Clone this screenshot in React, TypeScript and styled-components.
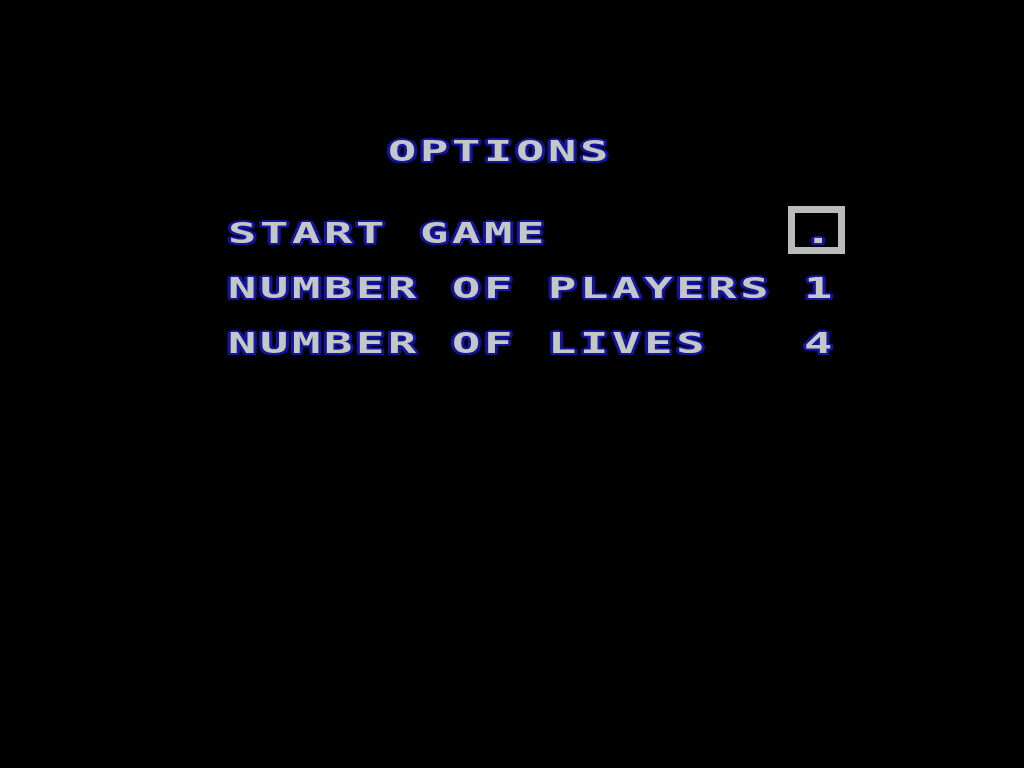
import React from "react";
import styled, { createGlobalStyle } from "styled-components";

const Global = createGlobalStyle`
  html, body { margin: 0; padding: 0; background: #000; }
  body { width: 1024px; height: 768px; overflow: hidden; }
`;

const Screen = styled.div`
  width: 1024px;
  height: 768px;
  box-sizing: border-box;
  background: #000;
  padding: 124px 0 0 228px;
  display: flex;
  flex-direction: column;
`;

const Glyphs = styled.span`
  display: inline-block;
  font-family: "DejaVu Sans Mono", "Liberation Mono", monospace;
  font-weight: 700;
  font-size: 29px;
  line-height: 55px;
  letter-spacing: 2.3px;
  color: #c4c8c4;
  white-space: pre;
  transform: scaleX(1.62);
  transform-origin: left center;
  text-shadow:
    2px 0 0 #14149c,
    -2px 0 0 #14149c,
    0 2px 0 #14149c,
    0 -2px 0 #14149c,
    1.5px 1.5px 0 #14149c,
    -1.5px 1.5px 0 #14149c,
    1.5px -1.5px 0 #14149c,
    -1.5px -1.5px 0 #14149c,
    0 0 3px #0c0c80;
`;

const Title = styled.div`
  height: 55px;
  padding-left: 160px;
  margin-bottom: 27px;
`;

const Menu = styled.div`
  display: flex;
  flex-direction: column;
`;

const Row = styled.div`
  display: flex;
  height: 55px;
`;

const Label = styled.div`
  width: 576px;
  flex: none;
`;

const Value = styled.div`
  position: relative;
  width: 32px;
  height: 55px;
`;

const Cursor = styled.div`
  position: absolute;
  left: -16px;
  top: 0;
  width: 57px;
  height: 48px;
  box-sizing: border-box;
  border: 7px solid #b9bcb9;
  filter: blur(0.6px);
`;

const items = [
  { label: "START GAME", value: ".", selected: true },
  { label: "NUMBER OF PLAYERS", value: "1", selected: false },
  { label: "NUMBER OF LIVES", value: "4", selected: false },
];

export default function App() {
  return (
    <>
      <Global />
      <Screen>
        <Title>
          <Glyphs>OPTIONS</Glyphs>
        </Title>
        <Menu>
          {items.map((it) => (
            <Row key={it.label}>
              <Label>
                <Glyphs>{it.label}</Glyphs>
              </Label>
              <Value>
                {it.selected && <Cursor />}
                <Glyphs>{it.value}</Glyphs>
              </Value>
            </Row>
          ))}
        </Menu>
      </Screen>
    </>
  );
}
